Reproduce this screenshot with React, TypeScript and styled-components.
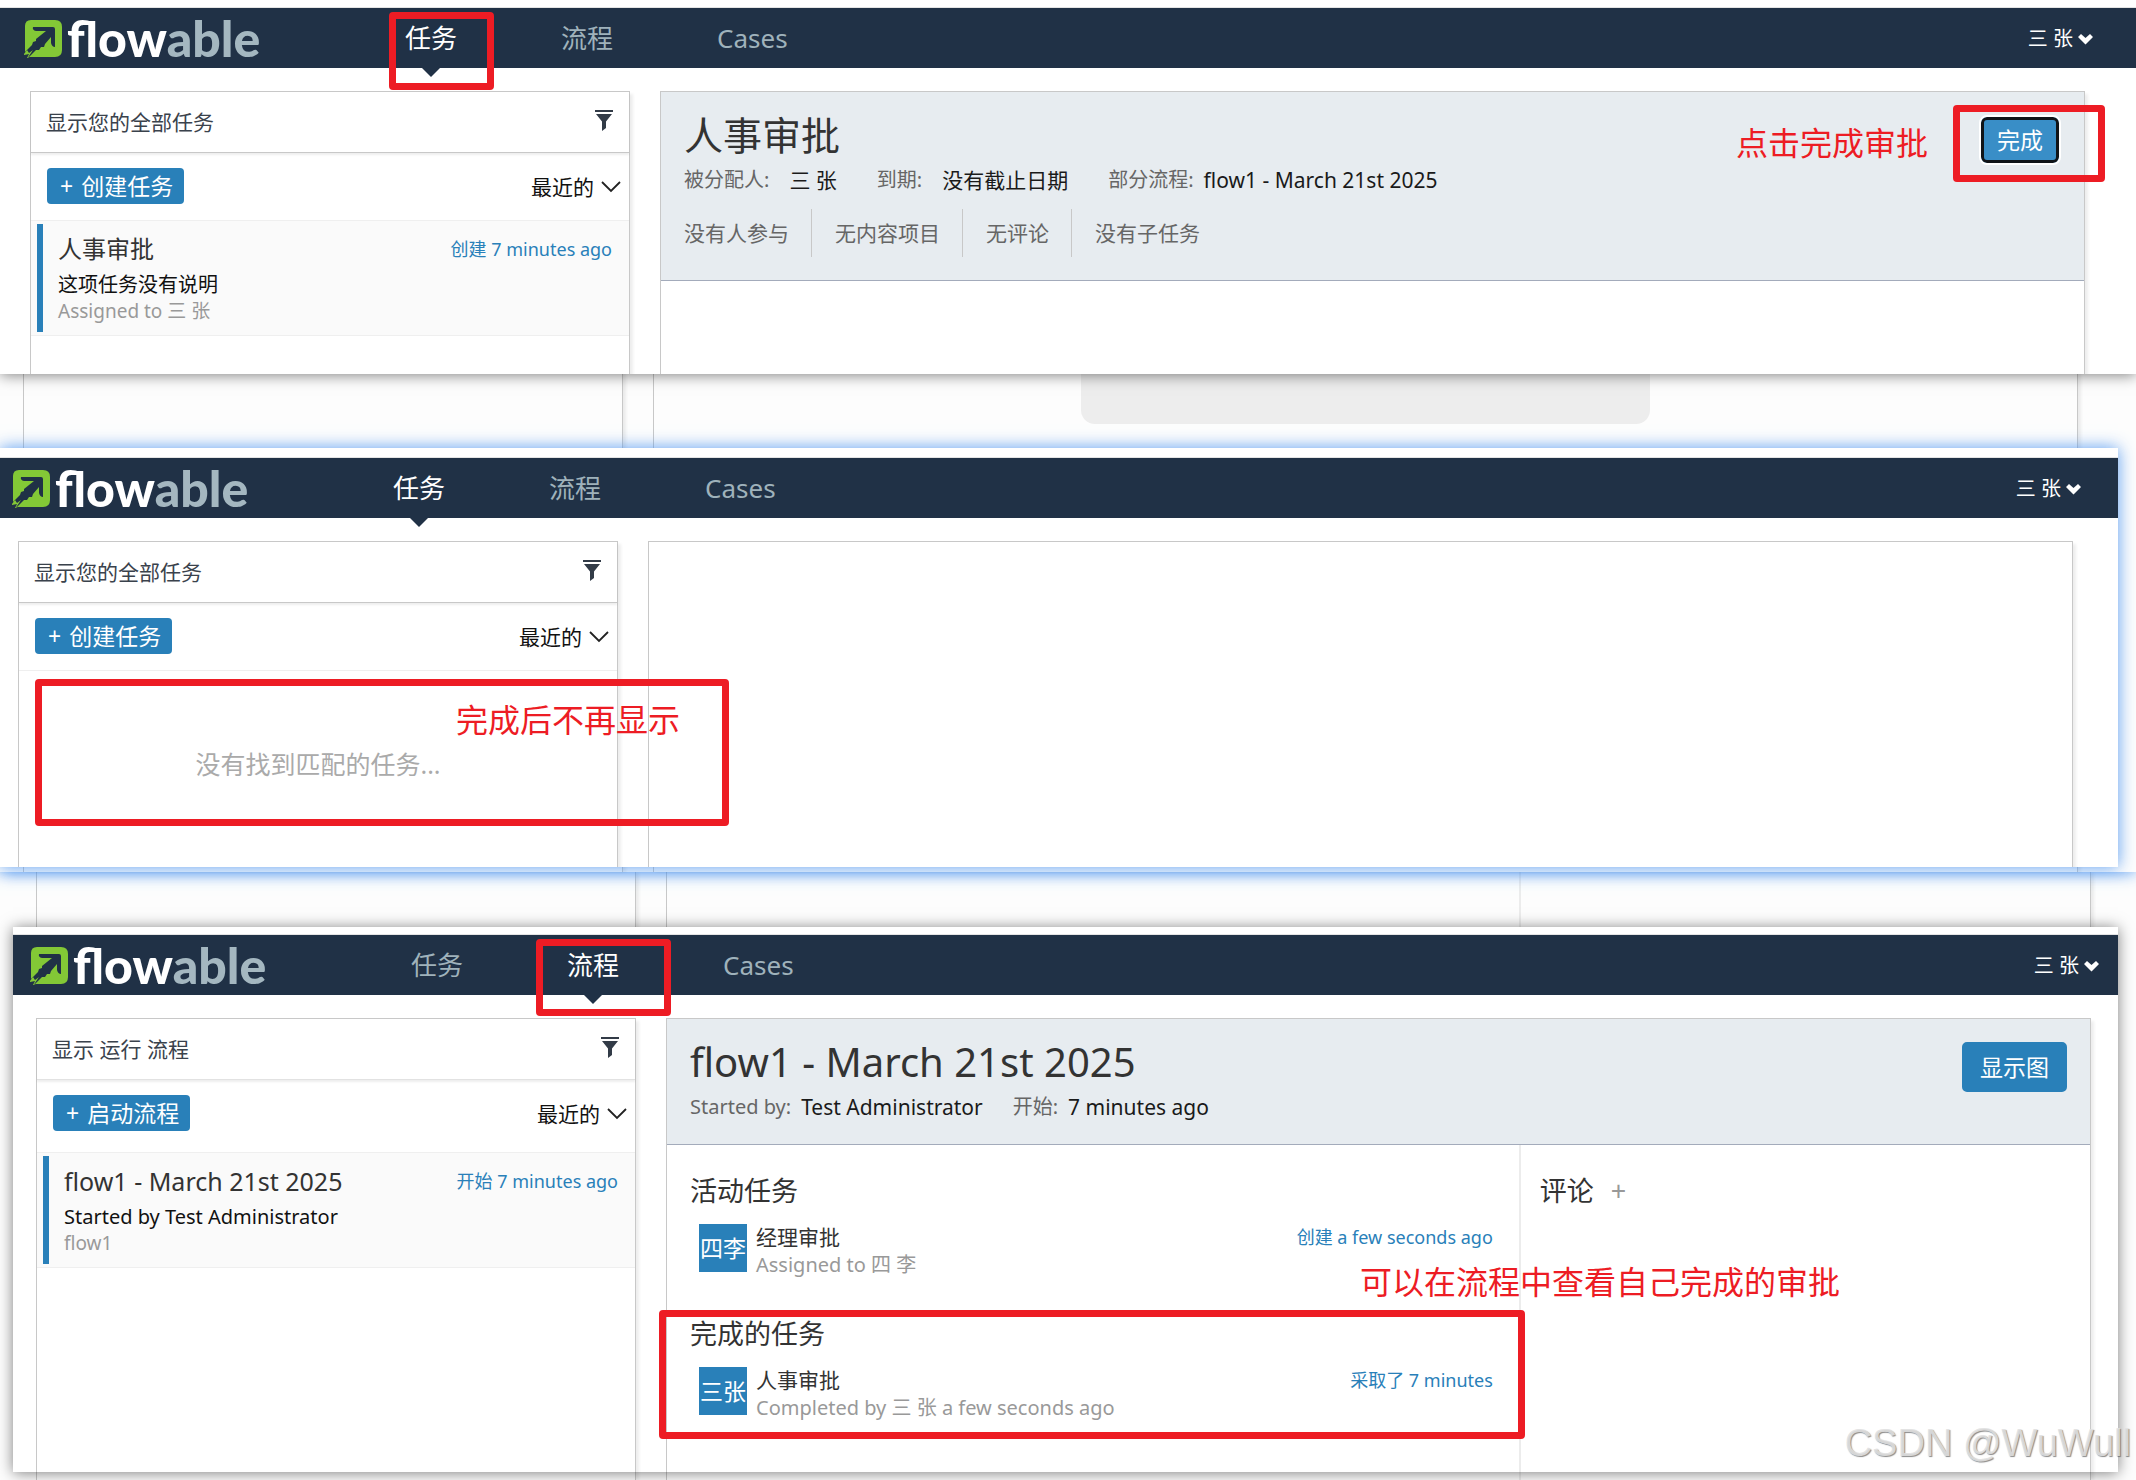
import React from 'react';
import styled, { createGlobalStyle } from 'styled-components';

const GlobalStyle = createGlobalStyle`
  * { box-sizing: border-box; }
  body {
    margin: 0;
    background: #fff;
    color: #111;
    font-family: "Noto Sans", "Noto Sans CJK SC", sans-serif;
    overflow-x: hidden;
  }
  h1, h2, p, ul { margin: 0; padding: 0; font-weight: 400; }
  ul { list-style: none; }
  button, select { font-family: inherit; }
`;

const navy = '#203146';
const blue = '#2980b9';
const line = '#c8c8c8';
const red = '#ed1c24';

/* Collage: each section layers its captures over a faded page behind them */
const Section = styled.section<{ $glow?: boolean }>`
  display: grid;
  grid-template-columns: minmax(0, 1fr);
  position: relative;
  background: #fdfdfd;
  z-index: ${(p) => (p.$glow ? 1 : 0)};
  box-shadow: ${(p) => (p.$glow ? '0 0 16px rgba(70, 145, 240, 0.9)' : 'none')};
`;

const Stack = styled.div`
  grid-area: 1 / 1;
  display: flex;
  flex-direction: column;
  min-width: 0;
`;

const Backdrop = styled.div<{ $left: number; $right: number }>`
  grid-area: 1 / 1;
  display: flex;
  gap: 30px;
  padding: 0 ${(p) => p.$right}px 0 ${(p) => p.$left}px;
`;

const BackdropSide = styled.div`
  flex: 0 0 600px;
  border: solid ${line};
  border-width: 0 1px;
  box-shadow: 3px 0 3px rgba(0, 0, 0, 0.07);
`;

const BackdropMain = styled.div`
  flex: 1;
  display: flex;
  border: solid ${line};
  border-width: 0 1px;
  box-shadow: 3px 0 3px rgba(0, 0, 0, 0.07);
`;

const GreyBlock = styled.div`
  width: 40%;
  height: 424px;
  margin-left: 30%;
  background: #ededed;
  border-radius: 14px;
`;

const SplitColumn = styled.div`
  width: 60%;
  border-right: 2px solid #ececec;
`;

type FrameProps = { $tone: 'grey' | 'blue'; $head: number; $margin: string };
const Frame = styled.article<FrameProps>`
  position: relative;
  margin: ${(p) => p.$margin};
  padding-top: ${(p) => p.$head}px;
  background: #fff;
  box-shadow: ${(p) =>
    p.$tone === 'blue' ? '0 0 16px rgba(70, 145, 240, 0.9)' : '0 1px 14px rgba(0, 0, 0, 0.5)'};
`;

const TopBar = styled.header<{ $left: number; $right: number }>`
  display: flex;
  align-items: center;
  height: 60px;
  padding: 0 ${(p) => p.$right - 8}px 0 ${(p) => p.$left - 6}px;
  background: ${navy};
  box-shadow: 0 -1px 0 #e4e4e4;
`;

const Brand = styled.a`
  display: flex;
  align-items: center;
  gap: 4px;
  width: 329px;
  color: #fff;
  font: 900 50px/60px Lato, sans-serif;
  text-decoration: none;
`;

const BrandTail = styled.span`
  color: #a4b7c0;
`;

const Nav = styled.nav`
  display: flex;
  flex: 1;
`;

const NavLink = styled.a<{ $active?: boolean }>`
  position: relative;
  padding: 0 52px;
  font-size: 26px;
  line-height: 60px;
  text-decoration: none;
  color: ${(p) => (p.$active ? '#fff' : '#9fb2bb')};
  &::after {
    content: '';
    display: ${(p) => (p.$active ? 'block' : 'none')};
    position: absolute;
    top: 100%;
    left: 50%;
    margin-left: -9px;
    border: 9px solid transparent;
    border-top-color: ${navy};
    border-bottom: 0;
  }
`;

const UserButton = styled.button`
  display: flex;
  align-items: center;
  gap: 5px;
  padding: 2px 0 0;
  border: 0;
  background: none;
  color: #fff;
  font-size: 20px;
  line-height: 28px;
`;

const Body = styled.main<{ $left: number; $right: number; $min: number }>`
  display: flex;
  gap: 30px;
  min-height: ${(p) => p.$min}px;
  padding: 23px ${(p) => p.$right}px 0 ${(p) => p.$left}px;
`;

const Panel = styled.section`
  border: 1px solid ${line};
  border-bottom: 0;
  box-shadow: 3px 3px 3px rgba(0, 0, 0, 0.07);
  background: #fff;
  clip-path: inset(0 -8px 0 0);
`;

const SidePanel = styled(Panel)`
  flex: 0 0 600px;
`;

const MainPanel = styled(Panel)`
  display: flex;
  flex-direction: column;
  flex: 1;
  min-width: 0;
`;

const FilterBar = styled.div<{ $soft?: boolean }>`
  display: flex;
  justify-content: space-between;
  align-items: center;
  height: 61px;
  padding: 0 16px 2px 15px;
  border-bottom: 1px solid ${(p) => (p.$soft ? '#e2e2e2' : line)};
  box-shadow: 0 2px 2px rgba(0, 0, 0, 0.07);
  color: #3a424c;
  font-size: 21px;
`;

const IconButton = styled.button`
  display: flex;
  padding: 0 0 2px;
  border: 0;
  background: none;
`;

const ActionBar = styled.div<{ $tall?: boolean }>`
  display: flex;
  justify-content: space-between;
  align-items: flex-start;
  height: ${(p) => (p.$tall ? 73 : 68)}px;
  padding: 15px 8px 0 16px;
  border-bottom: 1px solid #efefef;
`;

const CreateButton = styled.button`
  display: flex;
  align-items: center;
  gap: 8px;
  height: 36px;
  padding: 0 11px 0 13px;
  border: 0;
  border-radius: 4px;
  background: ${blue};
  color: #fff;
  font-size: 23px;
  line-height: 36px;
`;

const SortField = styled.label`
  display: flex;
  align-items: center;
  gap: 7px;
  height: 38px;
`;

const SortSelect = styled.select`
  appearance: none;
  padding: 0;
  border: 0;
  background: none;
  color: #111;
  font-size: 21px;
  line-height: 32px;
`;

const Item = styled.li`
  padding: 3px 0 3px 6px;
  border-bottom: 1px solid #efefef;
  background: #fafafa;
`;

const ItemInner = styled.div`
  padding: 9px 17px 9px 15px;
  border-left: 6px solid ${blue};
`;

const ItemHead = styled.div`
  display: flex;
  justify-content: space-between;
  margin-bottom: 6px;
  line-height: 32px;
`;

const ItemTitle = styled.h2<{ $large?: boolean }>`
  color: #333;
  font-size: ${(p) => (p.$large ? 25 : 24)}px;
`;

const Stamp = styled.span`
  color: ${blue};
  font-size: 18px;
`;

const ItemText = styled.p`
  font-size: 20px;
  line-height: 28px;
`;

const ItemNote = styled.p`
  color: #999;
  font-size: 19px;
  line-height: 24px;
`;

const EmptyText = styled.p`
  padding-top: 75px;
  color: #aaa;
  font-size: 25px;
  line-height: 36px;
  text-align: center;
`;

const DetailHead = styled.div`
  display: flex;
  justify-content: space-between;
  align-items: flex-start;
  padding: 18px 23px 23px;
  border-bottom: 1px solid #a3abbb;
  background: #e7ecf0;
`;

const DetailTitle = styled.h1<{ $large?: boolean }>`
  color: #333;
  font-size: ${(p) => (p.$large ? 40 : 39)}px;
  line-height: 50px;
`;

const MetaRow = styled.div`
  display: flex;
  gap: 30px;
  margin-top: 6px;
  line-height: 28px;
`;

const Meta = styled.div`
  display: flex;
  gap: 10px;
`;

const MetaLabel = styled.span`
  color: #666;
  font-size: 20px;
`;

const MetaValue = styled.span<{ $editable?: boolean }>`
  padding: 0 ${(p) => (p.$editable ? 10 : 0)}px;
  color: #1a1a1a;
  font-size: 21px;
`;

const Facts = styled.ul`
  display: flex;
  margin-top: 15px;
  color: #666;
  font-size: 21px;
  line-height: 48px;
`;

const Fact = styled.li`
  padding: 0 22px 0 23px;
  border-left: 1px solid ${line};
  &:first-child { padding-left: 0; border-left: 0; }
`;

const PrimaryButton = styled.button<{ $focused?: boolean }>`
  height: 50px;
  margin-top: 5px;
  padding: 0 16px;
  border: ${(p) => (p.$focused ? '2px solid #fff' : '2px solid ' + blue)};
  border-radius: ${(p) => (p.$focused ? 8 : 5)}px;
  box-shadow: ${(p) => (p.$focused ? 'inset 0 0 0 3px #101418' : 'none')};
  background: ${(p) => (p.$focused ? '#398ec7' : blue)};
  color: #fff;
  font-size: 23px;
  line-height: 46px;
`;

const Columns = styled.div`
  display: flex;
  flex: 1;
`;

const TaskColumn = styled.div`
  display: flex;
  flex-direction: column;
  gap: 36px;
  width: 60%;
  padding: 28px 26px 0 23px;
  border-right: 2px solid #ececec;
`;

const CommentColumn = styled.div`
  flex: 1;
  padding: 28px 19px 0;
`;

const Heading = styled.h2`
  display: flex;
  align-items: center;
  gap: 17px;
  color: #333;
  font-size: 27px;
  line-height: 36px;
`;

const AddButton = styled.button`
  padding: 0;
  border: 0;
  background: none;
  color: #999;
  font-size: 27px;
  line-height: 36px;
`;

const Entry = styled.div`
  display: flex;
  gap: 9px;
  height: 57px;
  margin-top: 14px;
  padding-left: 9px;
  line-height: 28px;
`;

const Avatar = styled.span`
  align-self: center;
  width: 48px;
  height: 48px;
  margin-bottom: 7px;
  background: ${blue};
  color: #fff;
  font-size: 23px;
  line-height: 48px;
  text-align: center;
  white-space: nowrap;
`;

const EntryText = styled.div`
  flex: 1;
`;

const EntryName = styled.p`
  color: #333;
  font-size: 21px;
`;

const EntryNote = styled.p`
  color: #999;
  font-size: 20px;
`;

/* Red hand-made marks laid over the captures */
type MarkProps = { $top: number; $left?: number; $right?: number };
const Mark = styled.div<MarkProps & { $w: number; $h: number }>`
  position: absolute;
  z-index: 2;
  top: ${(p) => p.$top}px;
  left: ${(p) => (p.$left === undefined ? 'auto' : p.$left + 'px')};
  right: ${(p) => (p.$right === undefined ? 'auto' : p.$right + 'px')};
  width: ${(p) => p.$w}px;
  height: ${(p) => p.$h}px;
  border: 7px solid ${red};
  border-radius: 4px;
  pointer-events: none;
`;

const MarkText = styled.p<MarkProps>`
  position: absolute;
  z-index: 2;
  top: ${(p) => p.$top}px;
  left: ${(p) => (p.$left === undefined ? 'auto' : p.$left + 'px')};
  right: ${(p) => (p.$right === undefined ? 'auto' : p.$right + 'px')};
  color: ${red};
  font-size: 32px;
  line-height: 40px;
  white-space: nowrap;
`;

const Watermark = styled.span`
  position: absolute;
  z-index: 3;
  right: 5px;
  bottom: 15px;
  color: rgba(225, 225, 225, 0.9);
  text-shadow: 1px 1px 1px rgba(90, 90, 90, 0.7);
  font: 38px/44px "Liberation Sans", sans-serif;
`;

const LogoMark = () => (
  <svg width="39" height="39" viewBox="0 0 39 39" aria-hidden="true">
    <path fill="#83c836" d="M7 1H31Q38 1 38 8V31Q38 38 31 38H5L1 34V7Q1 1 7 1Z" />
    <path
      fill={navy}
      d="M9 8H29Q31 8 31 10V28Q28 28 27 24V18L21 25L20 28L17 28L15 31L12 31L4 39H0V34L8 26L9 23L12 22L12 20L22 12H12Q8 11 9 8Z"
    />
    <path fill="#83c836" d="M0 35L3 31L5 34L9 31L4 38.500L6 39H3L5 35L0 36Z" />
  </svg>
);

const FilterIcon = () => (
  <svg width="18" height="21" viewBox="0 0 18 21" aria-hidden="true">
    <path fill="#323b47" d="M0 0H18V2H0ZM1 4H17L11 11.500V18L7 21V11.500Z" />
  </svg>
);

const ThinChevron = () => (
  <svg width="20" height="12" viewBox="0 0 20 12" aria-hidden="true">
    <path d="M1 1L10 10L19 1" fill="none" stroke="#222" strokeWidth="1.800" />
  </svg>
);

const BoldChevron = () => (
  <svg width="15" height="12" viewBox="0 0 15 12" aria-hidden="true">
    <path d="M0 4L3 1L7.500 5L12 1L15 4L7.500 11.500Z" fill="#fff" />
  </svg>
);

const tabs = ['任务', '流程', 'Cases'];

function AppBar({ active, left, right }: { active: string; left: number; right: number }) {
  return (
    <TopBar $left={left} $right={right}>
      <Brand href="#">
        <LogoMark />
        <span>flow<BrandTail>able</BrandTail></span>
      </Brand>
      <Nav>
        {tabs.map((tab) => (
          <NavLink key={tab} href="#" $active={tab === active}>{tab}</NavLink>
        ))}
      </Nav>
      <UserButton type="button">三 张<BoldChevron /></UserButton>
    </TopBar>
  );
}

type SideProps = { filter: string; action: string; process?: boolean; children?: React.ReactNode };
function Side({ filter, action, process, children }: SideProps) {
  return (
    <SidePanel>
      <FilterBar $soft={process}>
        {filter}
        <IconButton type="button" aria-label="filter"><FilterIcon /></IconButton>
      </FilterBar>
      <ActionBar $tall={process}>
        <CreateButton type="button"><span>+</span><span>{action}</span></CreateButton>
        <SortField>
          <SortSelect aria-label="sort"><option>最近的</option></SortSelect>
          <ThinChevron />
        </SortField>
      </ActionBar>
      {children}
    </SidePanel>
  );
}

type ListItemProps = { title: string; stamp: string; text: string; note: string; large?: boolean };
function ListItem({ title, stamp, text, note, large }: ListItemProps) {
  return (
    <ul>
      <Item>
        <ItemInner>
          <ItemHead><ItemTitle $large={large}>{title}</ItemTitle><Stamp>{stamp}</Stamp></ItemHead>
          <ItemText>{text}</ItemText>
          <ItemNote>{note}</ItemNote>
        </ItemInner>
      </Item>
    </ul>
  );
}

type TaskProps = { heading: string; initials: string; name: string; note: string; stamp: string };
function TaskGroup({ heading, initials, name, note, stamp }: TaskProps) {
  return (
    <div>
      <Heading>{heading}</Heading>
      <Entry>
        <Avatar>{initials}</Avatar>
        <EntryText>
          <EntryName>{name}</EntryName>
          <EntryNote>{note}</EntryNote>
        </EntryText>
        <Stamp>{stamp}</Stamp>
      </Entry>
    </div>
  );
}

export default function App() {
  return (
    <>
      <GlobalStyle />
      <Section $glow>
        <Backdrop $left={23} $right={58}>
          <BackdropSide />
          <BackdropMain><GreyBlock /></BackdropMain>
        </Backdrop>
        <Stack>
          <Frame $tone="grey" $head={8} $margin="0 0 74px">
            <AppBar active="任务" left={30} right={51} />
            <Body $left={30} $right={51} $min={306}>
              <Side filter="显示您的全部任务" action="创建任务">
                <ListItem title="人事审批" stamp="创建 7 minutes ago" text="这项任务没有说明" note="Assigned to 三 张" />
              </Side>
              <MainPanel>
                <DetailHead>
                  <div>
                    <DetailTitle>人事审批</DetailTitle>
                    <MetaRow>
                      <Meta><MetaLabel>被分配人:</MetaLabel><MetaValue $editable>三 张</MetaValue></Meta>
                      <Meta><MetaLabel>到期:</MetaLabel><MetaValue $editable>没有截止日期</MetaValue></Meta>
                      <Meta><MetaLabel>部分流程:</MetaLabel><MetaValue>flow1 - March 21st 2025</MetaValue></Meta>
                    </MetaRow>
                    <Facts>
                      {['没有人参与', '无内容项目', '无评论', '没有子任务'].map((fact) => (
                        <Fact key={fact}>{fact}</Fact>
                      ))}
                    </Facts>
                  </div>
                  <PrimaryButton type="button" $focused>完成</PrimaryButton>
                </DetailHead>
              </MainPanel>
            </Body>
            <Mark $top={12} $left={389} $w={105} $h={78} />
            <Mark $top={105} $right={31} $w={152} $h={77} />
            <MarkText $top={123} $right={208}>点击完成审批</MarkText>
          </Frame>

          <Frame $tone="blue" $head={10} $margin="0 18px 5px 0">
            <AppBar active="任务" left={18} right={45} />
            <Body $left={18} $right={45} $min={349}>
              <Side filter="显示您的全部任务" action="创建任务">
                <EmptyText>没有找到匹配的任务...</EmptyText>
              </Side>
              <MainPanel />
            </Body>
            <Mark $top={231} $left={35} $w={694} $h={147} />
            <MarkText $top={252} $left={456}>完成后不再显示</MarkText>
          </Frame>
        </Stack>
      </Section>

      <Section>
        <Backdrop $left={36} $right={45}>
          <BackdropSide />
          <BackdropMain><SplitColumn /></BackdropMain>
        </Backdrop>
        <Stack>
          <Frame $tone="grey" $head={8} $margin="55px 18px 8px 13px">
            <AppBar active="流程" left={23} right={27} />
            <Body $left={23} $right={27} $min={477}>
              <Side filter="显示 运行 流程" action="启动流程" process>
                <ListItem large title="flow1 - March 21st 2025" stamp="开始 7 minutes ago" text="Started by Test Administrator" note="flow1" />
              </Side>
              <MainPanel>
                <DetailHead>
                  <div>
                    <DetailTitle $large>flow1 - March 21st 2025</DetailTitle>
                    <MetaRow>
                      <Meta><MetaLabel>Started by:</MetaLabel><MetaValue>Test Administrator</MetaValue></Meta>
                      <Meta><MetaLabel>开始:</MetaLabel><MetaValue>7 minutes ago</MetaValue></Meta>
                    </MetaRow>
                  </div>
                  <PrimaryButton type="button">显示图</PrimaryButton>
                </DetailHead>
                <Columns>
                  <TaskColumn>
                    <TaskGroup heading="活动任务" initials="四李" name="经理审批" note="Assigned to 四 李" stamp="创建 a few seconds ago" />
                    <TaskGroup heading="完成的任务" initials="三张" name="人事审批" note="Completed by 三 张 a few seconds ago" stamp="采取了 7 minutes" />
                  </TaskColumn>
                  <CommentColumn>
                    <Heading>评论<AddButton type="button" aria-label="add">+</AddButton></Heading>
                  </CommentColumn>
                </Columns>
              </MainPanel>
            </Body>
            <Mark $top={12} $left={523} $w={135} $h={77} />
            <Mark $top={383} $left={646} $w={866} $h={129} />
            <MarkText $top={335} $left={1347}>可以在流程中查看自己完成的审批</MarkText>
          </Frame>
        </Stack>
        <Watermark>CSDN @WuWull</Watermark>
      </Section>
    </>
  );
}
